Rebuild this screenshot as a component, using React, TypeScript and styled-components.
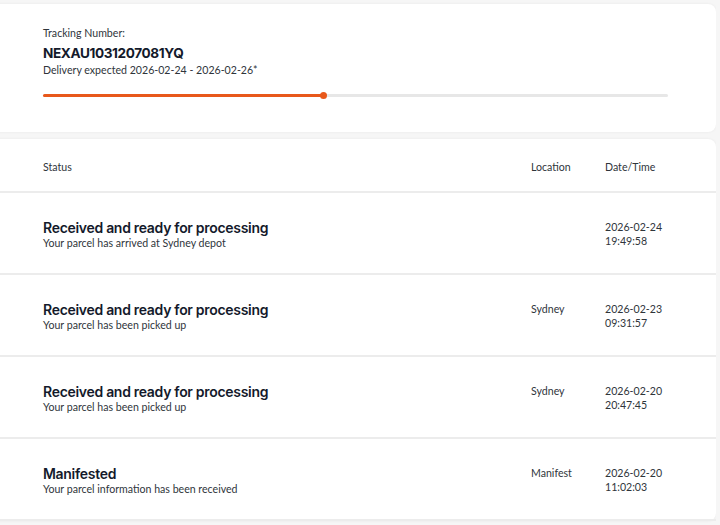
import React from 'react';
import styled, {createGlobalStyle} from 'styled-components';

const GlobalStyle = createGlobalStyle`
  html, body {
    margin: 0;
    padding: 0;
    background: #f6f6f6;
    font-family: Lato, "Liberation Sans", sans-serif;
    color: #2f353b;
  }
`

type TrackingEvent = {
  title: string;
  detail: string;
  location: string;
  date: string;
  time: string;
};

const events: TrackingEvent[] = [
  {title: 'Received and ready for processing', detail: 'Your parcel has arrived at Sydney depot', location: '', date: '2026-02-24', time: '19:49:58'},
  {title: 'Received and ready for processing', detail: 'Your parcel has been picked up', location: 'Sydney', date: '2026-02-23', time: '09:31:57'},
  {title: 'Received and ready for processing', detail: 'Your parcel has been picked up', location: 'Sydney', date: '2026-02-20', time: '20:47:45'},
  {title: 'Manifested', detail: 'Your parcel information has been received', location: 'Manifest', date: '2026-02-20', time: '11:02:03'},
];

const Page = styled.div`
  display: flex;
  flex-direction: column;
  gap: 7px;
  padding-top: 4px;
  margin-left: -8px;
  margin-right: 4px;
  height: 521px;
  overflow: hidden;
  font-size: 10.6px;
  line-height: 14px;
`

const Card = styled.section`
  background: #fff;
  border-radius: 8px;
  box-shadow: 0 0 3px rgba(0, 0, 0, 0.06);
  flex-shrink: 0;
`

const Summary = styled(Card)`
  height: 128px;
  box-sizing: border-box;
  padding: 22px 48px 0 51px;
`

const TrackingNo = styled.div`
  margin-top: 5px;
  font-family: Inter, "Noto Sans", sans-serif;
  font-weight: 700;
  font-size: 13.6px;
  letter-spacing: -0.4px;
  line-height: 17px;
  color: #141a2b;
`

const Expected = styled.div`
  margin-top: 1px;
`

const Track = styled.div`
  position: relative;
  margin-top: 17px;
  height: 3px;
  border-radius: 2px;
  background: #e7e7e7;
`

const Fill = styled.div`
  position: relative;
  height: 100%;
  border-radius: 2px;
  background: #e8581b;

  &::after {
    content: '';
    position: absolute;
    right: -3px;
    top: -2px;
    width: 7px;
    height: 7px;
    border-radius: 50%;
    background: #e8581b;
  }
`

const Grid = styled.div`
  display: grid;
  grid-template-columns: 1fr 74px 111px;
  padding-left: 51px;
  border-bottom: 2px solid #ececec;
  box-sizing: border-box;
`

const HeadRow = styled(Grid)`
  height: 54px;
  padding-top: 4px;
  align-items: center;
`

const Row = styled(Grid)`
  height: 82px;
  padding-top: 27px;
`

const Title = styled.div`
  font-family: Inter, "Noto Sans", sans-serif;
  font-weight: 600;
  font-size: 14px;
  letter-spacing: -0.3px;
  line-height: 16px;
  color: #141a2b;
`

export default function App() {
  return (
    <>
      <GlobalStyle/>
      <Page>
        <Summary>
          <div>Tracking Number:</div>
          <TrackingNo>NEXAU1031207081YQ</TrackingNo>
          <Expected>Delivery expected 2026-02-24 - 2026-02-26*</Expected>
          <Track>
            <Fill style={{width: '45%'}}/>
          </Track>
        </Summary>
        <Card>
          <HeadRow>
            <div>Status</div>
            <div>Location</div>
            <div>Date/Time</div>
          </HeadRow>
          {events.map((e, i) => (
            <Row key={i}>
              <div>
                <Title>{e.title}</Title>
                <div>{e.detail}</div>
              </div>
              <div>{e.location}</div>
              <div>{e.date}<br/>{e.time}</div>
            </Row>
          ))}
        </Card>
      </Page>
    </>
  );
}
